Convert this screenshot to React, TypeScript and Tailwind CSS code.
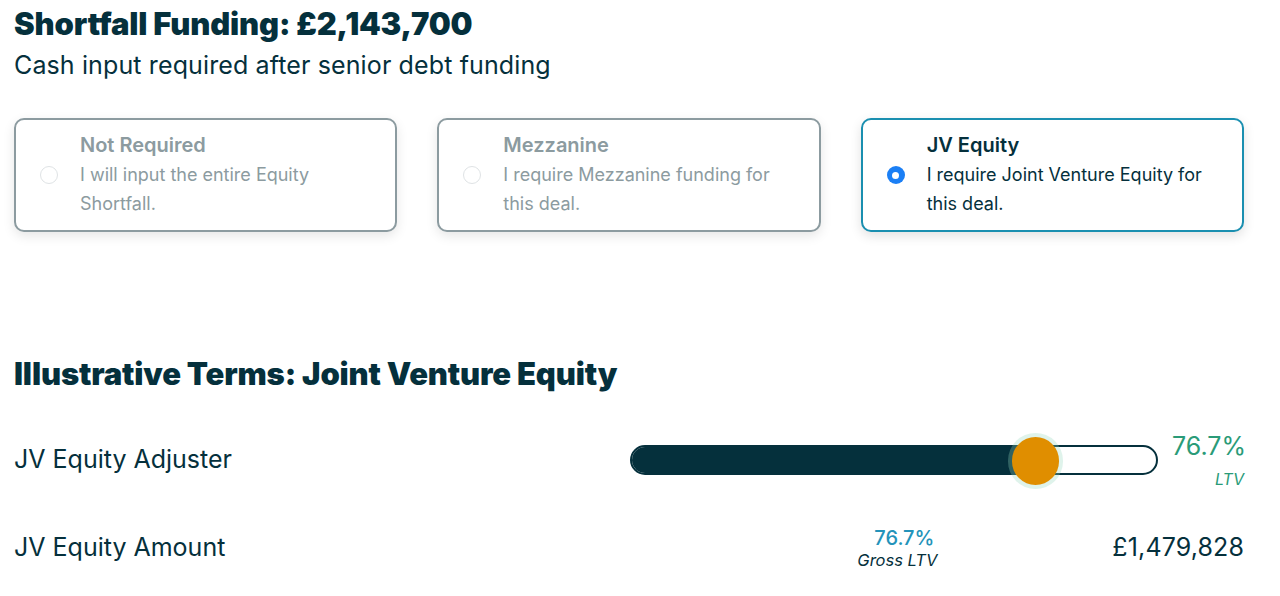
import React from 'react';

const options = [
  { title: 'Not Required', desc: 'I will input the entire Equity Shortfall.', selected: false },
  { title: 'Mezzanine', desc: 'I require Mezzanine funding for this deal.', selected: false },
  { title: 'JV Equity', desc: 'I require Joint Venture Equity for this deal.', selected: true },
];

export default function App() {
  return (
    <div className="w-[1280px] h-[596px] overflow-hidden bg-white text-[#05303c] px-[14px] pt-[4px]" style={{ fontFamily: 'Inter, "Noto Sans", sans-serif' }}>
      {/* Header */}
      <h1 className="text-[31px] leading-[40px] font-black tracking-[-0.005em]">Shortfall Funding: £2,143,700</h1>
      <p className="text-[25px] leading-[34px] mt-[4px] tracking-[0.005em]">Cash input required after senior debt funding</p>

      {/* Options */}
      <div className="grid grid-cols-3 gap-[40px] mt-[36px] w-[1230px]">
        {options.map((o) => (
          <div
            key={o.title}
            className={
              o.selected
                ? 'h-[114px] rounded-[10px] border-2 border-[#1a8fb0] bg-white shadow-[0_4px_12px_rgba(0,0,0,0.12)] flex items-center pl-[24px] pr-[30px]'
                : 'h-[114px] rounded-[10px] border-2 border-[#8c9ba0] bg-white shadow-[0_4px_12px_rgba(0,0,0,0.10)] flex items-center pl-[24px] pr-[30px]'
            }
          >
            {o.selected ? (
              <div className="w-[18px] h-[18px] shrink-0 rounded-full bg-[#1b7ff5] flex items-center justify-center">
                <div className="w-[7px] h-[7px] rounded-full bg-white" />
              </div>
            ) : (
              <div className="w-[18px] h-[18px] shrink-0 rounded-full border border-[#dfe3e5] bg-white" />
            )}
            <div className={o.selected ? 'ml-[22px] text-[#05303c]' : 'ml-[22px] text-[#8c9ba0]'}>
              <div className="text-[20px] leading-[26px] font-semibold">{o.title}</div>
              <div className="text-[18px] leading-[29px] mt-[2px]">{o.desc}</div>
            </div>
          </div>
        ))}
      </div>

      {/* Illustrative terms */}
      <h2 className="text-[31px] leading-[40px] font-black tracking-[-0.005em] mt-[122px]">Illustrative Terms: Joint Venture Equity</h2>

      <div className="w-[1230px] flex items-center mt-[33px] h-[66px]">
        <div className="text-[25px] flex-1">JV Equity Adjuster</div>
        <div className="relative w-[528px] h-[30px] rounded-full border-2 border-[#05303c] bg-white mr-[14px]">
          <div className="h-full w-[76%] rounded-l-full bg-[#05303c]" />
          <div className="absolute left-[380px] top-[-10px] w-[47px] h-[48px] rounded-full bg-[#e08e00] shadow-[0_0_0_4px_rgba(150,215,190,0.3)]" />
        </div>
        <div className="text-right text-[#2a9b78] w-[72px]">
          <div className="text-[25px] leading-[30px]">76.7%</div>
          <div className="text-[16px] italic leading-[20px] mt-[8px]">LTV</div>
        </div>
      </div>

      <div className="w-[1230px] flex items-center mt-[30px] h-[50px]">
        <div className="text-[25px] flex-1">JV Equity Amount</div>
        <div className="text-center w-[100px] mr-[165px]">
          <div className="text-[20px] leading-[24px] font-medium text-[#2393ba] pl-[14px]">76.7%</div>
          <div className="text-[16.5px] italic leading-[21px]">Gross LTV</div>
        </div>
        <div className="text-[25px] tracking-[0.005em]">£1,479,828</div>
      </div>
    </div>
  );
}
